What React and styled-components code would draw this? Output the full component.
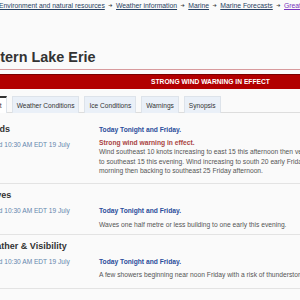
import React from 'react'
import styled, { createGlobalStyle } from 'styled-components'

const GlobalStyle = createGlobalStyle`
  html, body {
    margin: 0;
    padding: 0;
    background: #fafafa;
    overflow: hidden;
  }
  body {
    font-family: "Liberation Sans", Arial, sans-serif;
    color: #333;
  }
`

const Page = styled.div`
  width: 480px;
  margin-left: -29px;
`

const Breadcrumb = styled.nav`
  display: flex;
  align-items: center;
  white-space: nowrap;
  padding: 1px 0 0 28px;
  font-size: 6.8px;
  line-height: 9px;
`

const Crumb = styled.a`
  color: ${(p) => (p.visited ? '#7834bc' : '#284162')};
  text-decoration: underline;
`

const Arrow = styled.span`
  font-family: "DejaVu Sans", sans-serif;
  font-size: 5px;
  color: #333;
  margin: 0 3.5px;
`

const Title = styled.h1`
  margin: 39px 0 0;
  font-size: 14.4px;
  line-height: 17px;
  font-weight: 700;
  color: #333;
  padding-bottom: 3px;
  border-bottom: 1px solid #d79a9d;
`

const Banner = styled.div`
  margin-top: 4px;
  background: #b20000;
  border-top: 1px solid #7a0000;
  color: #fff;
  font-weight: 700;
  font-size: 6.7px;
  line-height: 14px;
  padding-left: 180px;
`

const Tabs = styled.div`
  display: flex;
  gap: 5px;
  margin-top: 7px;
  border-bottom: 1px solid #ddd;
`

const Tab = styled.div`
  height: 17px;
  box-sizing: border-box;
  padding: 0 4px;
  display: flex;
  align-items: center;
  font-size: 6.6px;
  color: #333;
  background: ${(p) => (p.active ? '#fff' : '#eaf0f8')};
  border: 1px solid #dde3ea;
  border-top: ${(p) => (p.active ? '2px solid #333' : '1px solid #dde3ea')};
  border-bottom: none;
  margin-bottom: -1px;
`

const Panel = styled.div`
  padding-top: 5px;
`

const Section = styled.section`
  display: grid;
  grid-template-columns: 116px 1fr;
  padding: 5px 0 ${(p) => p.pb}px 12px;
  border-bottom: 1px solid #e3e3e3;
`

const Side = styled.div``

const Heading = styled.h2`
  margin: 0;
  font-size: 9px;
  line-height: 13px;
  font-weight: 700;
  color: #333;
`

const Issued = styled.div`
  margin-top: 4px;
  font-size: 6.6px;
  line-height: 9px;
  color: #6487ad;
`

const Content = styled.div`
  padding-top: ${(p) => p.offset}px;
`

const Period = styled.div`
  font-size: 6.7px;
  line-height: 9px;
  font-weight: 700;
  color: #2a4d9b;
`

const Warning = styled.div`
  margin-top: 4px;
  font-size: 6.7px;
  line-height: 9px;
  font-weight: 700;
  color: #a94442;
`

const Text = styled.p`
  margin: ${(p) => p.gap || 0}px 0 0;
  font-size: 6.7px;
  line-height: 9.5px;
  color: #555;
  width: 222px;
`

const crumbs = [
  'Environment and natural resources',
  'Weather information',
  'Marine',
  'Marine Forecasts',
]

const tabs = ['Forecast', 'Weather Conditions', 'Ice Conditions', 'Warnings', 'Synopsis']

export default function App() {
  return (
    <Page>
      <GlobalStyle />
      <Breadcrumb>
        {crumbs.map((c) => (
          <React.Fragment key={c}>
            <Crumb href="#">{c}</Crumb>
            <Arrow>➔</Arrow>
          </React.Fragment>
        ))}
        <Crumb href="#" visited>
          Great Lakes
        </Crumb>
      </Breadcrumb>
      <Title>Western Lake Erie</Title>
      <Banner>STRONG WIND WARNING IN EFFECT</Banner>
      <Tabs>
        {tabs.map((t, i) => (
          <Tab key={t} active={i === 0}>
            {t}
          </Tab>
        ))}
      </Tabs>

      <Panel>
        <Section pb={7}>
          <Side>
            <Heading>Winds</Heading>
            <Issued>Issued 10:30 AM EDT 19 July</Issued>
          </Side>
          <Content offset={2}>
            <Period>Today Tonight and Friday.</Period>
            <Warning>Strong wind warning in effect.</Warning>
            <Text>
              Wind southeast 10 knots increasing to east 15 this afternoon then veering
              to southeast 15 this evening. Wind increasing to south 20 early Friday
              morning then backing to southeast 25 Friday afternoon.
            </Text>
          </Content>
        </Section>

        <Section pb={5}>
          <Side>
            <Heading>Waves</Heading>
            <Issued>Issued 10:30 AM EDT 19 July</Issued>
          </Side>
          <Content offset={17}>
            <Period>Today Tonight and Friday.</Period>
            <Text gap={5}>Waves one half metre or less building to one early this evening.</Text>
          </Content>
        </Section>

        <Section pb={8}>
          <Side>
            <Heading>Weather &amp; Visibility</Heading>
            <Issued>Issued 10:30 AM EDT 19 July</Issued>
          </Side>
          <Content offset={17}>
            <Period>Today Tonight and Friday.</Period>
            <Text gap={4}>
              A few showers beginning near noon Friday with a risk of thunderstorms.
            </Text>
          </Content>
        </Section>
      </Panel>
    </Page>
  )
}
